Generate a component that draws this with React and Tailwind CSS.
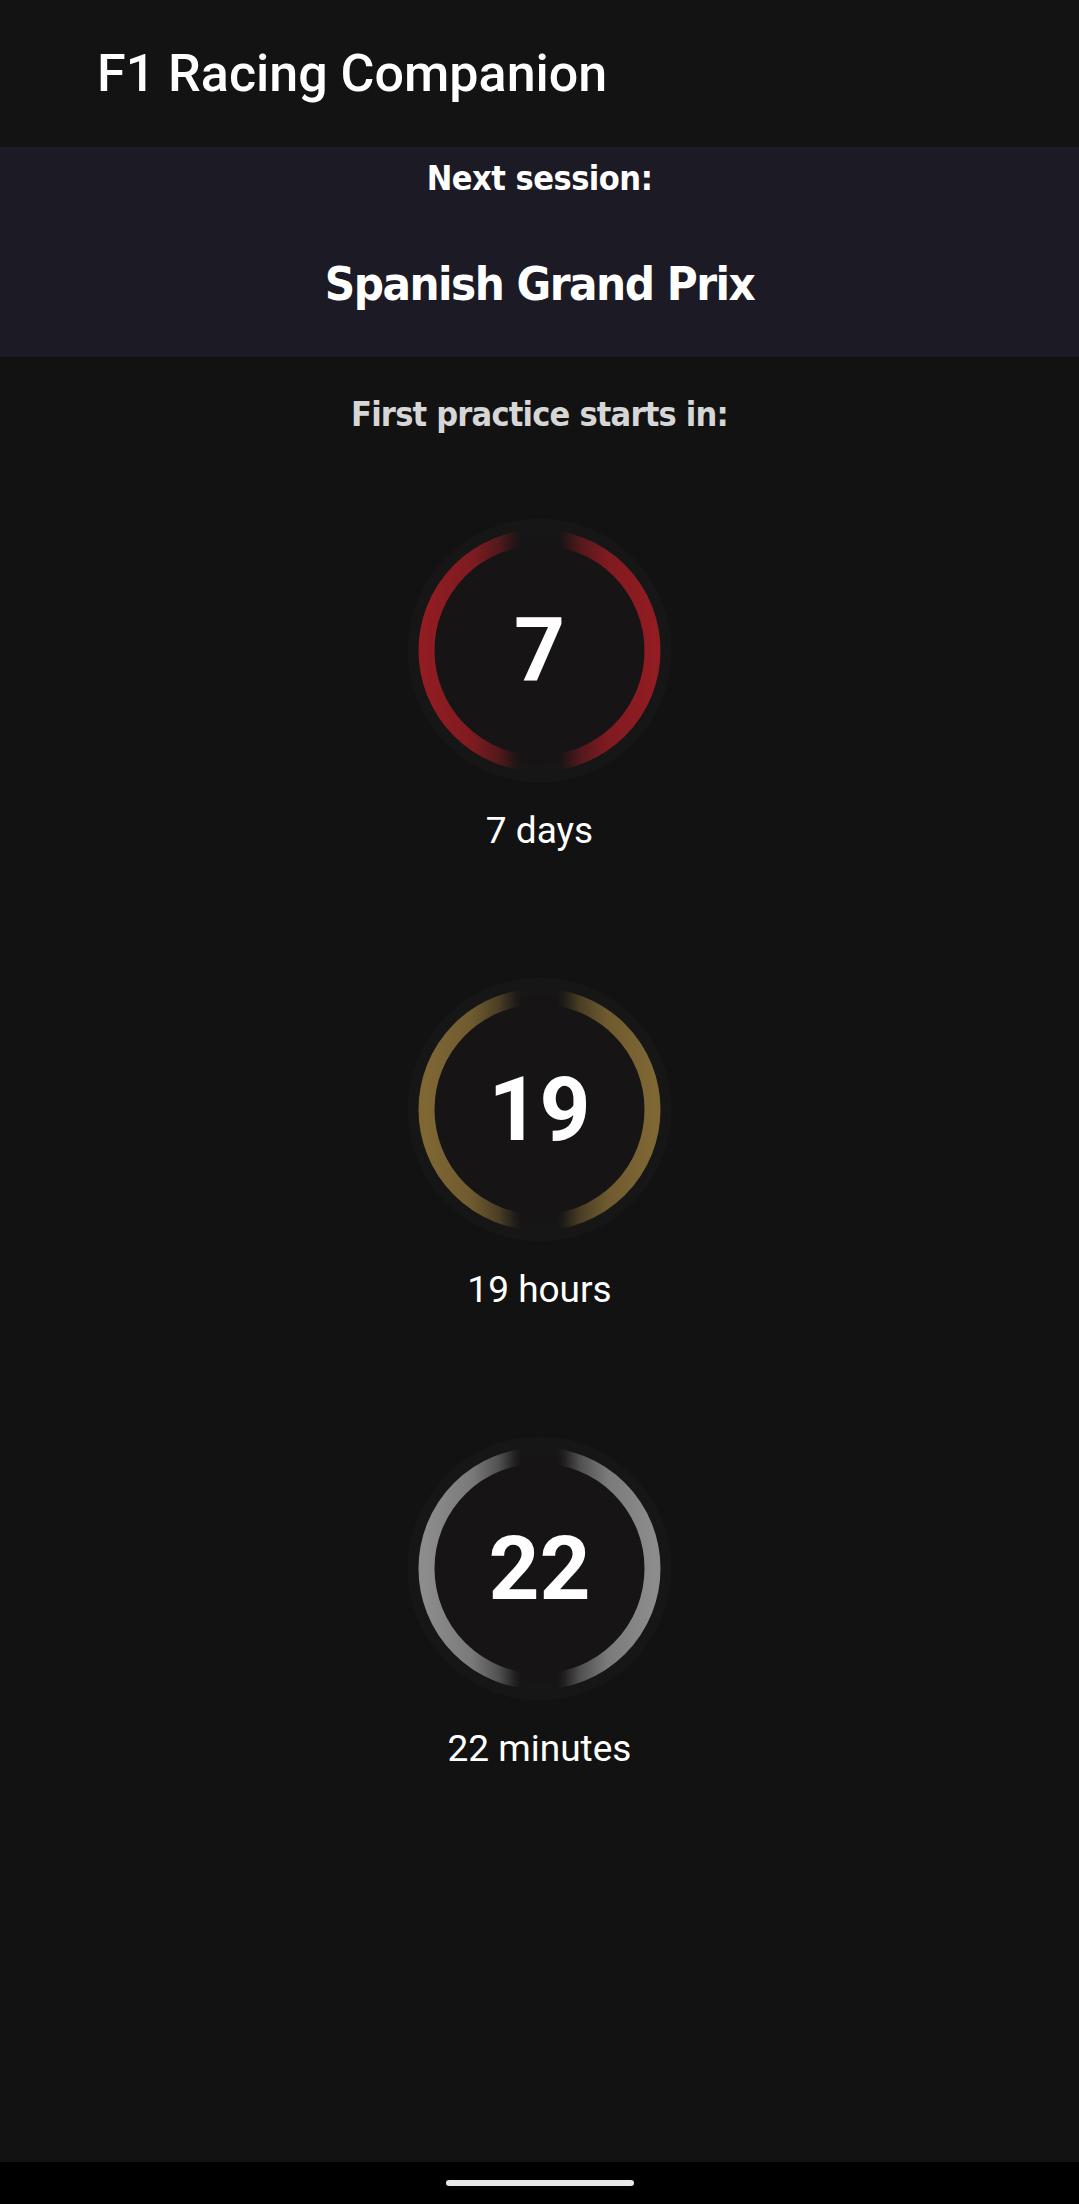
import React from 'react';

const condensed = { fontFamily: '"Liberation Sans Narrow", "DejaVu Sans Condensed", "DejaVu Sans", sans-serif' };
const roboto = { fontFamily: 'Roboto, "Noto Sans", sans-serif' };

const timers = [
    { id: 'days', value: 7, label: '7 days', color: '#911c22' },
    { id: 'hours', value: 19, label: '19 hours', color: '#7f6734' },
    { id: 'minutes', value: 22, label: '22 minutes', color: '#8c8c8c' },
];

const Gauge = ({ id, value, color }) => (
    <div className="relative w-[265px] h-[265px]">
        <svg width="265" height="265" viewBox="0 0 265 265">
            <defs>
                <linearGradient id={`ring-${id}`} x1="0" y1="0" x2="1" y2="0">
                    <stop offset="0" stopColor={color} stopOpacity="1" />
                    <stop offset="0.2" stopColor={color} stopOpacity="0.85" />
                    <stop offset="0.32" stopColor={color} stopOpacity="0.5" />
                    <stop offset="0.39" stopColor={color} stopOpacity="0.1" />
                    <stop offset="0.42" stopColor={color} stopOpacity="0" />
                    <stop offset="0.58" stopColor={color} stopOpacity="0" />
                    <stop offset="0.61" stopColor={color} stopOpacity="0.1" />
                    <stop offset="0.68" stopColor={color} stopOpacity="0.5" />
                    <stop offset="0.8" stopColor={color} stopOpacity="0.85" />
                    <stop offset="1" stopColor={color} stopOpacity="1" />
                </linearGradient>
            </defs>
            <circle cx="132.5" cy="132.5" r="132" fill="#161616" />
            <circle cx="132.5" cy="132.5" r="113" fill="#161415" stroke={`url(#ring-${id})`} strokeWidth="16" />
        </svg>
        {/* number sits over the ring */}
        <div className="absolute inset-0 flex items-center justify-center">
            <span className="text-[89px] leading-none font-bold text-white" style={roboto}>{value}</span>
        </div>
    </div>
);

const App = () => {
    return (
        <div className="min-h-[2204px] bg-[#121212] flex flex-col">
            {/* Toolbar */}
            <div className="h-[147px] flex items-center pl-[97px] bg-[#131313]">
                <h1 className="text-[52px] leading-none font-medium text-white" style={roboto}>F1 Racing Companion</h1>
            </div>

            {/* Next session band */}
            <div className="h-[210px] bg-[#1c1b25] flex flex-col items-center pt-[11px]">
                <div className="text-[34px] leading-[40px] font-bold tracking-[-0.5px] text-white" style={condensed}>Next session:</div>
                <div className="mt-[56px] text-[47px] leading-[60px] font-bold tracking-[-1.5px] text-white" style={condensed}>Spanish Grand Prix</div>
            </div>

            <div className="flex-1 flex flex-col items-center">
                <div className="mt-[35px] text-[34px] leading-[44px] font-bold tracking-[-0.8px] text-[#d6d6d6]" style={condensed}>
                    First practice starts in:
                </div>

                <div className="mt-[82px] flex flex-col items-center gap-[124px]">
                    {timers.map(t => (
                        <div key={t.id} className="flex flex-col items-center">
                            <Gauge id={t.id} value={t.value} color={t.color} />
                            <div className="mt-[26px] text-[37px] leading-[44px] text-white" style={roboto}>{t.label}</div>
                        </div>
                    ))}
                </div>
            </div>

            {/* System nav bar */}
            <div className="h-[42px] bg-black flex items-center justify-center shrink-0">
                <div className="w-[188px] h-[6px] rounded-full bg-[#e8e8e8]" />
            </div>
        </div>
    );
};

export default App;
